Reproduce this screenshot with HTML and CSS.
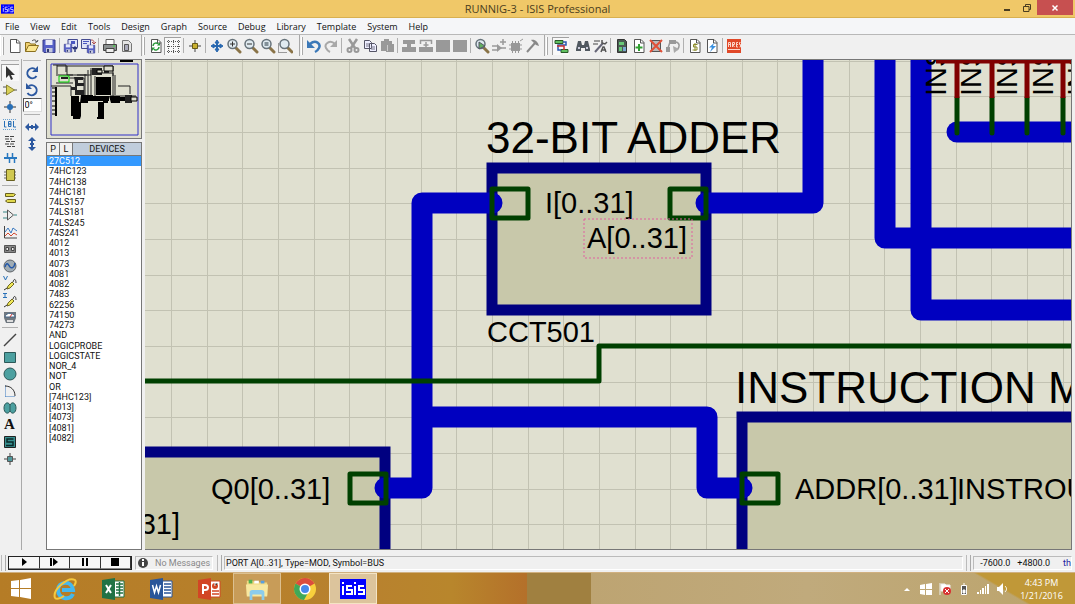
FILE: index.html
```html
<!DOCTYPE html>
<html lang="en">
<head>
<meta charset="utf-8">
<title>RUNNIG-3 - ISIS Professional</title>
<link rel="stylesheet" href="styles.css">
</head>
<body>
<svg class="defs" aria-hidden="true">
  <symbol id="lens" viewBox="0 0 16 16"><path d="M10 10l4 4" stroke="#8a7448" stroke-width="3" stroke-linecap="round"/><circle cx="6.500" cy="6" r="4.500" fill="#dfeaf0" stroke="#66727a" stroke-width="1.500"/></symbol>
  <symbol id="page" viewBox="0 0 16 16"><path d="M3.500 1.500h6.500l3 3v10h-9.500z" fill="#fff" stroke="#555"/><path d="M9.500 1.500v3.500h3.500" fill="none" stroke="#555"/></symbol>
  <symbol id="disk" viewBox="0 0 16 16"><path d="M2 2h12v12.500h-11l-1-1z" fill="#5660c8" stroke="#363a88"/><path d="M4.500 2h7v5h-7z" fill="#e8eaf8"/><path d="M5 10h6.500v4.500h-6.500z" fill="#c4c8dc"/><path d="M6 11h2v3h-2z" fill="#303870"/></symbol>
  <symbol id="probe" viewBox="0 0 16 16"><path d="M5 14l1-3 4-4 2 2-4 4z" fill="#f0e858" stroke="#706820"/><path d="M2 15l3-2M11 7c1-4 3-3 3 1" fill="none" stroke="#333"/></symbol>
</svg>

<header class="titlebar">
  <svg class="app-icon" viewBox="0 0 14 10" aria-hidden="true"><path d="M0 0h14v10H0z" fill="#00f"/><path d="M2.500 4v4M2.500 1.500v1M7 3H4.500v2.500H7V8H4M8.500 4v4M8.500 1.500v1M13 3h-2.500v2.500H13V8h-3" fill="none" stroke="#ccf"/></svg>
  <h1 class="title">RUNNIG-3 - ISIS Professional</h1>
  <div class="window-buttons">
    <button class="win" aria-label="Minimize"><svg viewBox="0 0 10 10"><path d="M2 6h6v2H2z" fill="#4a3d20"/></svg></button>
    <button class="win" aria-label="Restore"><svg viewBox="0 0 10 10"><path d="M1.500 3.500h5.500v5H1.500zM3.500 3V1.500h5v5H7" fill="none" stroke="#4a3d20"/></svg></button>
    <button class="win close" aria-label="Close"><svg viewBox="0 0 10 10"><path d="M2.500 2.500l5 5M7.500 2.500l-5 5" stroke="#fff" stroke-width="1.500"/></svg></button>
  </div>
</header>

<nav class="menubar">
  <button>File</button><button>View</button><button>Edit</button><button>Tools</button><button>Design</button><button>Graph</button><button>Source</button><button>Debug</button><button>Library</button><button>Template</button><button>System</button><button>Help</button>
</nav>

<div class="toolbar">
  <div class="group">
    <button aria-label="New"><svg viewBox="0 0 16 16"><use href="#page"/></svg></button>
    <button aria-label="Open"><svg viewBox="0 0 16 16"><path d="M1.500 13.500v-9h4l1 1.500h5v3" fill="#f0d070" stroke="#8a7020"/><path d="M1.500 13.500l3-6h10l-3 6z" fill="#fbe690" stroke="#8a7020"/><path d="M8 3c2-2 4-1 5 1l1-2M13 4l-2 0" fill="none" stroke="#444"/></svg></button>
    <button aria-label="Save"><svg viewBox="0 0 16 16"><use href="#disk"/></svg></button>
    <span class="sep"></span>
    <button aria-label="Import section"><svg viewBox="0 0 16 16"><path d="M5 1.500h9.500v8H5z" fill="#dfe3f6" stroke="#444a90"/><path d="M8 3h4v3H8z" fill="#4a56c0"/><use href="#disk" y="5" width="10" height="10"/><path d="M12 14V9M10 11l2-2 2 2" fill="none" stroke="#2a3478" stroke-width="1.500"/></svg></button>
    <button aria-label="Export section"><svg viewBox="0 0 16 16"><path d="M1.500 1.500h9v9h-9z" fill="#dfe3f6" stroke="#444a90"/><path d="M3 3.500h6M3 5.500h4" stroke="#4a56c0"/><path d="M11 2c3 0 3 1 3 4M12 4l2 2 2-2" fill="none" stroke="#b05050"/><use href="#disk" x="6" y="6" width="10" height="10"/></svg></button>
    <span class="sep"></span>
    <button aria-label="Print"><svg viewBox="0 0 16 16"><path d="M4 1.500h8v5H4z" fill="#fff" stroke="#666"/><path d="M1.500 6.500h13v6h-13z" fill="#8b9090" stroke="#444"/><path d="M4 10.500h8v4H4z" fill="#eee" stroke="#444"/><path d="M11 8h2" stroke="#50d050" stroke-width="1.500"/></svg></button>
    <button aria-label="Mark area"><svg viewBox="0 0 16 16"><path d="M3.500 2.500h6l3 3v8h-9z" fill="#e4e4e4" stroke="#777"/><path d="M5.500 6.500h4v6h-4z" fill="#aab" stroke="#555"/></svg></button>
  </div>
  <div class="group">
    <button aria-label="Redraw"><svg viewBox="0 0 16 16"><use href="#page"/><path d="M5 8c0-3 4-4 5-2M11 9c0 3-4 4-5 2" fill="none" stroke="#289838" stroke-width="1.500"/><path d="M9 7.500h3V4zM7 9.500H4V13z" fill="#289838"/></svg></button>
    <button class="pressed" aria-label="Toggle grid"><svg viewBox="0 0 16 16"><path d="M2 3.500h13M2 8.500h13M2 13.500h13M3.500 2v13M8.500 2v13M13.500 2v13" stroke="#555" stroke-dasharray="1 1"/></svg></button>
    <span class="sep"></span>
    <button aria-label="Toggle origin"><svg viewBox="0 0 16 16"><path d="M8 2v12M2 8h12" stroke="#444"/><path d="M5.500 5.500h5v5h-5z" fill="#c8b030" stroke="#665a18"/></svg></button>
    <span class="sep"></span>
    <button aria-label="Centre at cursor"><svg viewBox="0 0 16 16"><path d="M8 4v8M4 8h8" stroke="#2868b0" stroke-width="2"/><path d="M8 2l2 3H6zM8 14l2-3H6zM2 8l3-2v4zM14 8l-3-2v4z" fill="#2868b0" stroke="#2868b0"/></svg></button>
    <button aria-label="Zoom in"><svg viewBox="0 0 16 16"><use href="#lens"/><path d="M4 6h5M6.500 3.500v5" stroke="#333"/></svg></button>
    <button aria-label="Zoom out"><svg viewBox="0 0 16 16"><use href="#lens"/><path d="M4 6h5" stroke="#333"/></svg></button>
    <button aria-label="Zoom all"><svg viewBox="0 0 16 16"><use href="#lens"/><path d="M4.500 4h4v4h-4z" fill="#829098"/></svg></button>
    <button aria-label="Zoom area"><svg viewBox="0 0 16 16"><use href="#lens" x="1"/><path d="M1.500 5.500v9h9" fill="none" stroke="#444" stroke-dasharray="1 1"/></svg></button>
  </div>
  <div class="group tight">
    <button aria-label="Undo"><svg viewBox="0 0 16 16"><path d="M4 6c6-5 11 0 9 4-1 2-2 3-4 4" fill="none" stroke="#3a78b8" stroke-width="2.500"/><path d="M1 2v8h8z" fill="#3a78b8"/></svg></button>
    <button aria-label="Redo"><svg viewBox="0 0 16 16"><path d="M12 6C7 1 1 6 3 10c1 2 2 3 4 4" fill="none" stroke="#a8a8a8" stroke-width="2"/><path d="M14 2v7H7z" fill="#a8a8a8"/></svg></button>
    <span class="sep"></span>
    <button aria-label="Cut"><svg viewBox="0 0 16 16"><path d="M4 1l6 9M12 1L6 10" stroke="#999" stroke-width="2.500"/><circle cx="4.500" cy="12" r="2" fill="none" stroke="#999" stroke-width="2"/><circle cx="11.500" cy="12" r="2" fill="none" stroke="#999" stroke-width="2"/></svg></button>
    <button aria-label="Copy"><svg viewBox="0 0 16 16"><path d="M2.500 2.500h5l2 2v6h-7zM7.500 5.500h5l2 2v6h-7z" fill="#eef" stroke="#556"/><path d="M4 6h3M4 8h3M9 9h4M9 11h4" stroke="#778"/></svg></button>
    <button aria-label="Paste"><svg viewBox="0 0 16 16"><path d="M2 3h3V1h5v2h3v3h2v8H7v-1H2z" fill="#999"/><path d="M8.500 7v6" stroke="#ccc"/></svg></button>
    <span class="sep"></span>
    <button aria-label="Block copy"><svg viewBox="0 0 16 16"><path d="M2 2h12v4h-4v3h5v5H1V9h5V6H2z" fill="#999"/></svg></button>
    <button aria-label="Block move"><svg viewBox="0 0 16 16"><path d="M2.500 6V2.500h11V6M8 4v6M5.500 7h5" fill="none" stroke="#999" stroke-width="1.500"/><path d="M1 9h14v5H1z" fill="#999"/></svg></button>
    <button aria-label="Block rotate"><svg viewBox="0 0 16 16"><path d="M1 2h14v12H1z" fill="#999"/></svg></button>
    <button aria-label="Block delete"><svg viewBox="0 0 16 16"><path d="M1 2h14v12H1z" fill="#999"/></svg></button>
    <span class="sep"></span>
    <button aria-label="Pick parts"><svg viewBox="0 0 16 16"><use href="#lens"/><path d="M5 4l6 4-6 3z" fill="#62b060" stroke="#556"/></svg></button>
    <button aria-label="Make device"><svg viewBox="0 0 16 16"><path d="M6 6l5 4-5 4z" fill="#999"/><path d="M1 8h5M1 12h5M10 10h5M12 1v6M9 4h6" stroke="#999" stroke-width="1.500"/></svg></button>
    <button aria-label="Packaging tool"><svg viewBox="0 0 16 16"><path d="M3 5h9v8H3z" fill="#999"/><path d="M4.500 3v12M7.500 3v12M10.500 3v12M1 7h13M1 11h13M12 3l3-2" stroke="#999"/></svg></button>
    <button aria-label="Decompose"><svg viewBox="0 0 16 16"><path d="M2 14l8-9" stroke="#888" stroke-width="2"/><path d="M6 2c4-1 7 2 8 6l-3-1-4-4z" fill="#888"/></svg></button>
  </div>
  <div class="group last">
    <button class="pressed" aria-label="Wire autorouter"><svg viewBox="0 0 16 16"><path d="M2 2.500h8v3H2zM8 11.500h7v3H8z" fill="#60c060" stroke="#285828"/><path d="M10 4h3v3H5v5h3" fill="none" stroke="#2858b0" stroke-width="1.500"/><path d="M4 8h7v4" fill="none" stroke="#c83030" stroke-width="1.500"/></svg></button>
    <span class="sep blank"></span>
    <button aria-label="Search and tag"><svg viewBox="0 0 16 16"><path d="M3 3h3l1 4h2l1-4h3l2 8v2h-5v-3H6v3H1v-2z" fill="#505860"/><path d="M3 10h2M11 10h2" stroke="#ccd" stroke-width="2"/></svg></button>
    <button aria-label="Property assignment tool"><svg viewBox="0 0 16 16"><path d="M2 3h6M1 6h5" stroke="#444"/><path d="M3 14L11 5" stroke="#667" stroke-width="2"/><path d="M10 2v3l3 1 2-2M9 14l2-5h1l2 5M10 12h4" fill="none" stroke="#555" stroke-width="1.500"/></svg></button>
    <span class="sep"></span>
    <button aria-label="Design explorer"><svg viewBox="0 0 16 16"><path d="M3.500 1.500h7l2 2v11h-9z" fill="#4a5a52" stroke="#333"/><path d="M5 4h5v3H5zM5 9h3v4H5z" fill="#68c878"/><path d="M9 9h3v4H9z" fill="#78a8d0"/></svg></button>
    <button aria-label="New sheet"><svg viewBox="0 0 16 16"><use href="#page"/><path d="M8 6v7M4.500 9.500h7" stroke="#30a030" stroke-width="2"/></svg></button>
    <button aria-label="Remove sheet"><svg viewBox="0 0 16 16"><path d="M3.500 2.500h9v11h-9z" fill="#bbb" stroke="#555"/><path d="M2 2l12 12M14 2L2 14" stroke="#e05038" stroke-width="2"/></svg></button>
    <button aria-label="Exit to parent"><svg viewBox="0 0 16 16"><path d="M4 2h7v4H4zM1 9h4v5H1z" fill="#999"/><path d="M5 4L3 10M11 4c4 1 4 5 1 8" fill="none" stroke="#999" stroke-width="1.500"/><path d="M8 8l6 3-5 4z" fill="#aaa"/></svg></button>
    <span class="sep"></span>
    <button aria-label="Bill of materials"><svg viewBox="0 0 16 16"><use href="#page"/><path d="M10.500 6.500H6.500v2.500h3.500V12H5.500M8 5v8" fill="none" stroke="#8a8a28"/></svg></button>
    <button aria-label="Electrical rules check"><svg viewBox="0 0 16 16"><use href="#page"/><path d="M10 5L5 9.500h3L6 14l6-6H9z" fill="#3890e0"/></svg></button>
    <span class="sep"></span>
    <button aria-label="Netlist to ARES"><svg viewBox="0 0 16 16"><path d="M1 1h14v14H1z" fill="#e04828"/><path d="M2.500 9V4.500h2V9M2.500 6.500h2M6.500 9V4.500h2V6.500h-2l2 2.500M12 4.500h-1.500V9H12M10.500 6.500H12M14.500 4.500h-1v2h1v2.500h-1M2 11.500h12" fill="none" stroke="#fcd8cc"/></svg></button>
  </div>
</div>

<main class="workspace">
  <aside class="modes">
    <button class="pressed" aria-label="Selection"><svg viewBox="0 0 16 16"><path d="M4 1v12l3-3 2 5 2-1-2-4h4z" fill="#333"/></svg></button>
    <button aria-label="Component"><svg viewBox="0 0 16 16"><path d="M1 5h4M1 11h4M12 8h3" stroke="#555"/><path d="M4.500 3l8 5-8 5z" fill="#d8d058" stroke="#8a8430"/></svg></button>
    <button aria-label="Junction dot"><svg viewBox="0 0 16 16"><path d="M8 2v12M2 8h12" stroke="#333"/><circle cx="8" cy="8" r="3" fill="#2870b8"/></svg></button>
    <button aria-label="Wire label"><svg viewBox="0 0 16 16"><path d="M1 3.500h14M1 13.500h14" stroke="#68a0d0" stroke-dasharray="1 1"/><path d="M2.500 5v6h2M6.500 5.500v5H9V8H7h2V5.500zM11.500 5v6H14" fill="none" stroke="#2870b8"/></svg></button>
    <button aria-label="Text script"><svg viewBox="0 0 16 16"><path d="M3 3.500h10M3 6h7M4 8.500h9M3 11h10M5 13.500h8" stroke="#444" stroke-dasharray="4 1"/></svg></button>
    <button aria-label="Buses"><svg viewBox="0 0 16 16"><path d="M2 8h13" stroke="#2878c0" stroke-width="2"/><path d="M5.500 3v5M10.500 3v5M7.500 8v5M12.500 8v5" stroke="#2878c0" stroke-width="1.500"/></svg></button>
    <button aria-label="Subcircuit"><svg viewBox="0 0 16 16"><path d="M2 5h12M2 8h12M2 11h12" stroke="#666"/><path d="M4.500 2.500h8v11h-8z" fill="#d0c850" stroke="#686020"/></svg></button>
    <span class="rule"></span>
    <button aria-label="Terminals"><svg viewBox="0 0 16 16"><path d="M3.500 3.500h8l2 1-2 2h-8zM13.500 9.500h-8l-2 1.500 2 1.500h8z" fill="#e0d84c" stroke="#686020"/></svg></button>
    <button aria-label="Device pins"><svg viewBox="0 0 16 16"><path d="M5.500 3l6 5-6 5z" fill="#eee" stroke="#555"/><path d="M1 5h4M1 11h4M12 8h3" stroke="#388888"/></svg></button>
    <button aria-label="Graph"><svg viewBox="0 0 16 16"><path d="M2.500 2v12H15" fill="none" stroke="#444"/><path d="M3 8l3-4 3 5 2-5 4 3" fill="none" stroke="#3878c0"/><path d="M3 12l3-3 3 3 3-3 3 2" fill="none" stroke="#d04830"/></svg></button>
    <button aria-label="Tape recorder"><svg viewBox="0 0 16 16"><path d="M2.500 4.500h11v7h-11z" fill="#888" stroke="#555"/><path d="M4 6.500h2.500v3H4zM9.500 6.500H12v3H9.500z" fill="#eee" stroke="#444"/></svg></button>
    <button aria-label="Generator"><svg viewBox="0 0 16 16"><circle cx="8" cy="8" r="6" fill="#a0acb4" stroke="#606468"/><path d="M3 9c2-7 4-1 5 0s4 2 5-4" fill="none" stroke="#2458a8" stroke-width="1.500"/></svg></button>
    <button aria-label="Voltage probe"><svg viewBox="0 0 16 16"><use href="#probe"/><path d="M1.500 1l2 4 2-4" fill="none" stroke="#2870b8"/></svg></button>
    <button aria-label="Current probe"><svg viewBox="0 0 16 16"><use href="#probe"/><path d="M1 1.500h4M3 1v5M1 5.500h4" fill="none" stroke="#2870b8"/></svg></button>
    <button aria-label="Virtual instruments"><svg viewBox="0 0 16 16"><path d="M2 3h12v6l-2 5H4L2 9z" fill="#707880"/><path d="M3 8c1-5 9-5 10 0z" fill="#fff" stroke="#468"/><path d="M8 8l2-3" stroke="#c33"/><path d="M5 11h6v2H5z" fill="#ddd"/></svg></button>
    <span class="rule"></span>
    <button aria-label="Line"><svg viewBox="0 0 16 16"><path d="M2 14L14 2" stroke="#444" stroke-width="1.500"/></svg></button>
    <button aria-label="Box"><svg viewBox="0 0 16 16"><path d="M2.500 3.500h11v10h-11z" fill="#4ca0a0" stroke="#2c5858"/></svg></button>
    <button aria-label="Circle"><svg viewBox="0 0 16 16"><circle cx="8" cy="8" r="6" fill="#4ca0a0" stroke="#2c5858"/></svg></button>
    <button aria-label="Arc"><svg viewBox="0 0 16 16"><path d="M3.500 13.500v-11" stroke="#3878c0" stroke-dasharray="1 1"/><path d="M3.500 13.500h10" stroke="#3878c0" stroke-dasharray="1 1"/><path d="M3 3c6 0 10 4 10 10" fill="none" stroke="#333"/></svg></button>
    <button aria-label="Path"><svg viewBox="0 0 16 16"><path d="M8 5C6 1 2 3 2 8s4 7 6 3c2 4 6 2 6-3s-4-7-6-3z" fill="#4ca0a0" stroke="#2c5858"/><path d="M8 5v6" stroke="#2c5858"/></svg></button>
    <button class="serif" aria-label="Text">A</button>
    <button aria-label="Symbol"><svg viewBox="0 0 16 16"><path d="M2.500 2.500h11v11h-11z" fill="#389090" stroke="#222"/><path d="M11.500 5H5v3h6v3.500H4" fill="none" stroke="#082828" stroke-width="1.500"/></svg></button>
    <button aria-label="Marker"><svg viewBox="0 0 16 16"><path d="M8 2v12M2 8h12" stroke="#444"/><path d="M5.500 5.500h5v5h-5z" fill="#50989c" stroke="#555"/></svg></button>
  </aside>

  <aside class="modes orient">
    <button aria-label="Rotate clockwise"><svg viewBox="0 0 16 16"><path d="M12.500 11A5 5 0 1 1 11 4" fill="none" stroke="#2c58a0" stroke-width="2"/><path d="M14 1v6H8z" fill="#2c58a0"/></svg></button>
    <button aria-label="Rotate anticlockwise"><svg viewBox="0 0 16 16"><path d="M3.500 11A5 5 0 1 0 5 4" fill="none" stroke="#2c58a0" stroke-width="2"/><path d="M2 1v6h6z" fill="#2c58a0"/></svg></button>
    <input class="angle" type="text" value="0°" aria-label="Angle">
    <span class="rule"></span>
    <button aria-label="Mirror horizontally"><svg viewBox="0 0 16 16"><path d="M4 8h8M8 6v4" stroke="#2c58a0" stroke-width="2"/><path d="M1 8l4-4v8zM15 8l-4-4v8z" fill="#2c58a0"/></svg></button>
    <button aria-label="Mirror vertically"><svg viewBox="0 0 16 16"><path d="M8 4v8M6 8h4" stroke="#2c58a0" stroke-width="2"/><path d="M8 1L4 5h8zM8 15l-4-4h8z" fill="#2c58a0"/></svg></button>
  </aside>

  <section class="side">
    <div class="overview">
      <svg viewBox="0 0 94 78" aria-label="Overview">
        <path d="M4 4h87v71H4z" fill="none" stroke="#3030c8"/>
        <path d="M73 0h13v2H73z"/>
        <path d="M10 5v9M10 6h56M20 6v9h20M44 8v30M47 13h19v3M66 6v10M66 16v20M9 15h17M9 23h17M4 26h20v10M22 18h15v17M71 26h12v8M6 5h13v7M38 14v24M41 10v30M48 16v20M68 15v20M63 36h26M30 15h14v-5" fill="none" stroke="#222"/>
        <path d="M49 17h15v18H49zM24 42h10v14l-1 3h-7v-3h-2zM51 42h6v17h-7v-2h1zM34 35h12v6h-5v2H33zM46 36h16v5H46zM62 36h11v7h-9zM73 37h11v4H73zM24 36h8v6h-8zM56 40h5v3h-5z"/>
        <path d="M27 17h9v3h-5v3h6v3h-7v4h7v5h-9v-5h-4v-3h4v-5zM45 8h10v7H45zM57 8h5v5h-5zM14 17h7v2h-7zM78 35h7v8h-7z" fill="#222"/>
        <path d="M57 6h9v5h-9zM84 37h6v4h-6zM50 10h5v3h-5z" fill="#dedece" stroke="#000"/>
        <path d="M9 27v29" stroke="#000" stroke-width="2"/>
        <path d="M5 28h5M5 32h5M5 36h5M5 41h5M5 46h5M5 50h5M5 54h5" stroke="#000" fill="none"/>
        <path d="M12 16h10v6H12z" fill="none" stroke="#00d000"/>
      </svg>
    </div>
    <div class="devices">
      <div class="devices-head">
        <button>P</button><button>L</button>
        <h2>DEVICES</h2>
      </div>
      <ul role="listbox" aria-label="Devices">
        <li role="option" aria-selected="true">27C512</li><li role="option">74HC123</li><li role="option">74HC138</li><li role="option">74HC181</li><li role="option">74LS157</li><li role="option">74LS181</li><li role="option">74LS245</li><li role="option">74S241</li><li role="option">4012</li><li role="option">4013</li><li role="option">4073</li><li role="option">4081</li><li role="option">4082</li><li role="option">7483</li><li role="option">62256</li><li role="option">74150</li><li role="option">74273</li><li role="option">AND</li><li role="option">LOGICPROBE</li><li role="option">LOGICSTATE</li><li role="option">NOR_4</li><li role="option">NOT</li><li role="option">OR</li><li role="option">[74HC123]</li><li role="option">[4013]</li><li role="option">[4073]</li><li role="option">[4081]</li><li role="option">[4082]</li>
      </ul>
    </div>
  </section>

  <section class="sheet">
    <svg class="schematic" aria-label="Schematic">
      <defs>
        <pattern id="grid" x="171" y="61" width="107" height="107" patternUnits="userSpaceOnUse">
          <path d="M0 0h1v107H0zM36 0h1v107h-1zM71 0h1v107h-1zM0 0h107v1H0zM0 35h107v1H0zM0 71h107v1H0z" fill="#c2c2b2"/>
        </pattern>
      </defs>
      <g transform="translate(-145 -60)">
        <rect class="paper" width="4000" height="3000"/>
        <rect width="4000" height="3000" fill="url(#grid)"/>
        <g class="block">
          <rect x="492" y="168" width="214" height="142"/>
          <rect x="-100" y="452" width="485" height="400"/>
          <rect x="742" y="417" width="900" height="500"/>
        </g>
        <g class="bus">
          <path d="M492 203H422V488H385"/>
          <path d="M424 417H707V488H742"/>
          <path d="M706 203H813V0"/>
          <path d="M885 0V238H4000"/>
          <path d="M921 0V310H4000"/>
          <path d="M957 132H4000"/>
        </g>
        <g class="wire">
          <path d="M0 381H599V346H4000"/>
          <path d="M957 98V133M992 98V133M1027 98V133M1063 98V133"/>
        </g>
        <g class="port">
          <rect x="492" y="189" width="36" height="29"/>
          <rect x="670" y="189" width="36" height="29"/>
          <rect x="350" y="474" width="36" height="29"/>
          <rect x="742" y="474" width="36" height="29"/>
        </g>
        <g class="pin-name">
          <text transform="translate(946 96) rotate(-90)">INS</text>
          <text transform="translate(981 96) rotate(-90)">INS</text>
          <text transform="translate(1017 96) rotate(-90)">INS</text>
          <text transform="translate(1053 96) rotate(-90)">INS</text>
          <text transform="translate(1088 96) rotate(-90)">INS</text>
        </g>
        <path class="pin" d="M936 61H4000M957 61V98M992 61V98M1027 61V98M1063 61V98"/>
        <g class="name">
          <text x="486" y="153">32-BIT ADDER</text>
          <text x="735" y="403">INSTRUCTION MEMORY</text>
        </g>
        <g class="pin-name">
          <text x="545" y="213">I[0..31]</text>
          <text x="587" y="248">A[0..31]</text>
          <text x="487" y="342">CCT501</text>
          <text x="211" y="499">Q0[0..31]</text>
          <text x="180" y="534" text-anchor="end">[0..31]</text>
          <text x="795" y="499">ADDR[0..31]</text>
          <text x="957" y="499">INSTROUT</text>
        </g>
        <rect class="selection" x="584" y="219" width="108" height="39"/>
      </g>
    </svg>
  </section>
</main>

<footer class="statusbar">
  <span class="grip"></span>
  <div class="sim">
    <button aria-label="Play"><svg viewBox="0 0 12 10"><path d="M4 1l5 4-5 4z"/></svg></button>
    <button aria-label="Step"><svg viewBox="0 0 12 10"><path d="M2 1h2v8H2zM5 1l5 4-5 4z"/></svg></button>
    <button aria-label="Pause"><svg viewBox="0 0 12 10"><path d="M3 1h2v8H3zM7 1h2v8H7z"/></svg></button>
    <button aria-label="Stop"><svg viewBox="0 0 12 10"><path d="M2 1h8v8H2z"/></svg></button>
  </div>
  <div class="field messages">
    <svg viewBox="0 0 12 12" aria-hidden="true"><circle cx="6" cy="6" r="5" fill="#444"/><path d="M6 2v2M6 5v4" stroke="#fff" stroke-width="2"/></svg>
    <span>No Messages</span>
  </div>
  <span class="grip"></span>
  <div class="field hint">PORT A[0..31], Type=MOD, Symbol=BUS</div>
  <span class="grip"></span>
  <div class="field coords"><span>-7600.0</span><span>+4800.0</span><span class="unit">th</span></div>
</footer>

<nav class="taskbar">
  <button class="start" aria-label="Start"><svg viewBox="0 0 24 24"><path d="M2 4l8-1v8H2zM11 3l11-2v10H11zM2 12h8v8l-8-1zM11 12h11v10l-11-2z" fill="#fff"/></svg></button>
  <button aria-label="Internet Explorer"><svg viewBox="0 0 24 24"><path d="M20 17c-3 7-15 5-15-4S19 3 20 13H9" fill="none" stroke="#45b8ee" stroke-width="4"/><path d="M2 21C-1 13 15-1 22 3c2 2 0 4-1 6M2 21c2 2 6 0 9-2" fill="none" stroke="#f6c83c" stroke-width="2"/></svg></button>
  <button aria-label="Excel"><svg viewBox="0 0 24 24"><path d="M13 4h10v16H13z" fill="#fff" stroke="#207245"/><path d="M15 7h7M15 10h7M15 13h7M15 16h7M18.500 5v14" stroke="#207245" stroke-width="1.500"/><path d="M1 3l13-2v22L1 21z" fill="#207245"/><path d="M5 8l5 8M10 8l-5 8" stroke="#fff" stroke-width="2"/></svg></button>
  <button aria-label="Word"><svg viewBox="0 0 24 24"><path d="M13 4h10v16H13z" fill="#fff" stroke="#2a5699"/><path d="M15 7h7M15 10h7M15 13h7M15 16h7" stroke="#2a5699" stroke-width="1.500"/><path d="M1 3l13-2v22L1 21z" fill="#2a5699"/><path d="M3.500 8L5.500 15.500 7.500 9l2 6.500L11.500 8" fill="none" stroke="#fff" stroke-width="1.500"/></svg></button>
  <button aria-label="PowerPoint"><svg viewBox="0 0 24 24"><path d="M13 4h10v16H13z" fill="#fff" stroke="#d24625"/><circle cx="18" cy="9" r="3" fill="#d24625"/><path d="M18 9V6h3" stroke="#fff"/><path d="M15 14h7M15 17h7" stroke="#d24625" stroke-width="1.500"/><path d="M1 3l13-2v22L1 21z" fill="#d24625"/><path d="M6 17V8h2c4 0 4 5 0 5H6" fill="none" stroke="#fff" stroke-width="2"/></svg></button>
  <button class="running" aria-label="File Explorer"><svg viewBox="0 0 26 24"><path d="M2 3h7l1 2h14v14H2z" fill="#f0d880"/><path d="M4 2h4v4H4z" fill="#50b050"/><path d="M10 3h5v3h-5z" fill="#fff"/><path d="M17 3h4v3h-4z" fill="#58a0e0"/><path d="M1 7h24l-1 13H2z" fill="#f8e8a0"/><path d="M5 24v-8c0-2 1-3 3-3h10c2 0 3 1 3 3v8h-3v-6H8v6z" fill="#8cccec"/></svg></button>
  <button aria-label="Chrome"><svg viewBox="0 0 24 24"><circle cx="12" cy="12" r="11" fill="#f8cf3c"/><path d="M12 12L2.500 6.500a11 11 0 0 1 19 0z" fill="#dc4c3e"/><path d="M12 12L2.500 6.500A11 11 0 0 0 11 23l5-9z" fill="#40a858"/><circle cx="12" cy="12" r="5.500" fill="#fff"/><circle cx="12" cy="12" r="4" fill="#4888ec"/></svg></button>
  <button class="running active" aria-label="ISIS"><svg class="isis" viewBox="0 0 26 20"><path d="M0 0h26v20H0z" fill="#00f"/><path d="M3 7v9M3 3v2M12 7H7v4h5v4H6M15 7v9M15 3v2M24 7h-5v4h5v4h-6" fill="none" stroke="#fff" stroke-width="2"/></svg></button>
  <div class="tray">
    <svg viewBox="0 0 12 12"><path d="M3 8l3-3 3 3z" fill="#fff"/></svg>
    <svg viewBox="0 0 12 12"><path d="M0 2l5-1v5H0zM6 1l6-1v6H6zM0 7h5v5l-5-1zM6 7h6v5H6z" fill="#fff"/></svg>
    <svg viewBox="0 0 12 12"><path d="M1 0v12M2 1h4l1 1h4v6H2z" fill="#fff" stroke="#eee"/><circle cx="8" cy="8" r="4" fill="#d83030"/><path d="M6 6l4 4M10 6l-4 4" stroke="#fff"/></svg>
    <svg viewBox="0 0 12 12"><path d="M3.500 2.500h5v9h-5z" fill="#555" stroke="#fff"/><path d="M5 1h2M5 7h2v3H5z" fill="#fff" stroke="#fff"/></svg>
    <svg viewBox="0 0 12 12"><path d="M0 9h2v2H0zM3 7h1v4H3zM5 5h2v6H5zM8 3h1v8H8zM10 1h2v10h-2z" fill="#fff"/></svg>
    <svg viewBox="0 0 12 12"><path d="M1 4h2l4-4v12L3 8H1z" fill="#fff"/><path d="M9 3c2 2 2 4 0 6" fill="none" stroke="#fff"/></svg>
  </div>
  <div class="clock"><span>4:43 PM</span><span>1/21/2016</span></div>
</nav>
</body>
</html>
```

FILE: styles.css
```css
*, *::before { box-sizing: border-box; }

body {
  margin: 0;
  height: 100vh;
  display: flex;
  flex-direction: column;
  overflow: hidden;
  background: #f0f0f0;
  color: #111;
  font-family: Roboto, "Liberation Sans", sans-serif;
  font-size: 9px;
}

button {
  margin: 0;
  padding: 0;
  border: 0;
  background: none;
  color: inherit;
  font: inherit;
  display: flex;
  align-items: center;
  justify-content: center;
}

h1, h2, ul { margin: 0; padding: 0; font-weight: normal; list-style: none; }

.defs { display: none; }

/* Title bar */
.titlebar {
  display: grid;
  grid-template-columns: 1fr auto 1fr;
  height: 18px;
  background: #f0c868;
  border-bottom: 1px solid #d8b050;
}
.app-icon { width: 13px; height: 10px; margin: 4px 1px; }
.title {
  font-family: "Open Sans", sans-serif;
  font-size: 11px;
  line-height: 17px;
  color: #4a3d20;
}
.window-buttons { display: flex; justify-content: flex-end; padding-right: 2px; }
.win { width: 20px; height: 15px; }
.win svg { width: 10px; height: 10px; }
.win.close { width: 36px; background: #c75050; }

/* Menu */
.menubar {
  display: flex;
  gap: 11px;
  height: 16px;
  padding-left: 5px;
  background: #f5f6f8;
  font-family: "Open Sans", sans-serif;
  font-size: 9px;
}

/* Toolbar */
.toolbar {
  display: flex;
  height: 25px;
  padding-bottom: 3px;
  border-top: 1px solid #b8b8b8;
}
.group {
  display: flex;
  align-items: center;
  padding-right: 6px;
  border-left: 1px solid #fff;
}
.group::before {
  content: "";
  width: 2px;
  height: 18px;
  margin-left: 1px;
  margin-right: 2px;
  border-left: 1px solid #fff;
  border-right: 1px solid #aaa;
}
.group + .group { border-left-color: #a8a8a8; }
.group.tight { padding-right: 3px; }
.group.last::before { margin-right: 4px; }
.group button { width: 17px; height: 18px; }
.group svg, .modes svg { width: 16px; height: 16px; }
.pressed { background: #f8f8f8; box-shadow: inset 1px 1px 0 #a0a0a0; }
.sep { width: 5px; height: 15px; background: linear-gradient(#b0b0b0, #b0b0b0) 2px 0 / 1px 100% no-repeat; }
.sep.blank { background: none; }

/* Work area */
.workspace { flex: 1; display: flex; min-height: 0; padding-right: 3px; }
.modes {
  display: flex;
  flex-direction: column;
  align-items: center;
  width: 22px;
  padding-top: 5px;
  padding-right: 2px;
  border-right: 1px solid #aaa;
  background: linear-gradient(#b8b8b8, #b8b8b8) 1px 1px / 18px 1px no-repeat;
}
.modes button { width: 18px; height: 17px; flex-shrink: 0; }
.rule { width: 16px; height: 6px; flex-shrink: 0; background: linear-gradient(#b0b0b0, #b0b0b0) 0 2px / 100% 1px no-repeat; }
.orient { width: 24px; border-right: 0; padding-right: 4px; }
.angle {
  width: 19px;
  height: 14px;
  padding: 0 1px;
  border: 1px solid #555;
  border-right-color: #ddd;
  border-bottom-color: #ddd;
  background: #fff;
  font: inherit;
}
.serif { font-family: "Liberation Serif", serif; font-size: 15px; font-weight: bold; }

.side { display: flex; flex-direction: column; gap: 3px; width: 96px; }
.overview {
  flex-shrink: 0;
  border: 1px solid #777;
  background: #e0e0d0;
}
.overview svg { display: block; width: 100%; }
.devices { flex: 1; display: flex; flex-direction: column; border: 1px solid #777; background: #fff; }
.devices-head { display: flex; height: 13px; background: #c0cddc; border-bottom: 1px solid #777; }
.devices-head button { width: 13px; background: #f0f0f0; border-right: 1px solid #777; }
.devices-head h2 { flex: 1; font-size: 9px; line-height: 12px; text-align: center; }
.devices li { height: 10px; padding-left: 2px; line-height: 10px; }
.devices li:nth-child(4n + 2) { height: 11px; }
.devices li[aria-selected] { background: #3399ff; color: #fff; }

.sheet { flex: 1; min-width: 0; margin-left: 3px; border: 1px solid #777; border-left: 0; background: #e0e0d0; }
.schematic { display: block; width: 100%; height: 100%; font-family: "Liberation Sans", Arial, sans-serif; }
.paper { fill: #e0e0d0; }
.block rect { fill: #c8c8aa; stroke: #000080; stroke-width: 11; }
.bus path { fill: none; stroke: #0000c0; stroke-width: 21; stroke-linecap: round; stroke-linejoin: round; }
.wire path { fill: none; stroke: #004000; stroke-width: 5; stroke-linecap: round; stroke-linejoin: round; }
.port rect { fill: none; stroke: #004000; stroke-width: 5; stroke-linejoin: round; }
.pin { fill: none; stroke: #800000; stroke-width: 5; }
.name { font-size: 44px; }
.pin-name { font-size: 29px; }
.selection { fill: none; stroke: #e060a0; stroke-dasharray: 2 2; }

/* Status bar */
.statusbar { display: flex; align-items: center; height: 22px; padding: 3px 3px 0 0; }
.grip { width: 5px; height: 16px; margin-left: 1px; margin-right: 2px; flex-shrink: 0; border-left: 1px solid #bbb; border-right: 1px solid #aaa; }
.sim { display: flex; width: 124px; height: 14px; border: 1px solid #222; }
.sim button { flex: 1; border-right: 1px solid #333; border-bottom: 1px solid #888; background: #f6f6f6; }
.sim svg { width: 12px; height: 10px; }
.field { display: flex; align-items: center; height: 14px; border: 1px solid #bbb; border-right-color: #fff; border-bottom-color: #fff; }
.messages { gap: 6px; width: 78px; margin-left: 3px; margin-right: 3px; padding-left: 1px; color: #888; }
.messages svg { width: 12px; height: 12px; }
.hint { flex: 1; margin-right: 2px; padding-left: 1px; }
.coords { justify-content: flex-end; gap: 7px; width: 99px; }
.unit { margin-left: 6px; color: #2020a0; }

/* Task bar */
.taskbar {
  display: flex;
  align-items: center;
  height: 32px;
  background:
    linear-gradient(30deg, transparent 50%, #c09838 52%) right / 150px 100% no-repeat,
    linear-gradient(90deg, #b57c26 0%, #b8822e 35%, #b8862c 42%, #b4702a 49%, #a08040 49%, #a08040 55%, #bda472 55%, #c0aa7c 75%, #bca46c 100%);
  border-top: 1px solid #d0b080;
  color: #fff;
  font-family: "Open Sans", sans-serif;
}
.taskbar button { width: 48px; height: 31px; flex-shrink: 0; }
.taskbar .start { width: 41px; }
.taskbar button svg { width: 24px; height: 24px; }
.taskbar .isis { width: 26px; height: 20px; }
.running { border: 1px solid #dcc090; background: #c89c58; }
.running.active { background: #dcc49c; border-color: #f4e4c4; }
.tray { display: flex; gap: 7px; margin-left: auto; }
.tray svg { width: 12px; height: 12px; }
.clock { display: flex; flex-direction: column; align-items: center; width: 67px; font-size: 9px; line-height: 13px; }
```
